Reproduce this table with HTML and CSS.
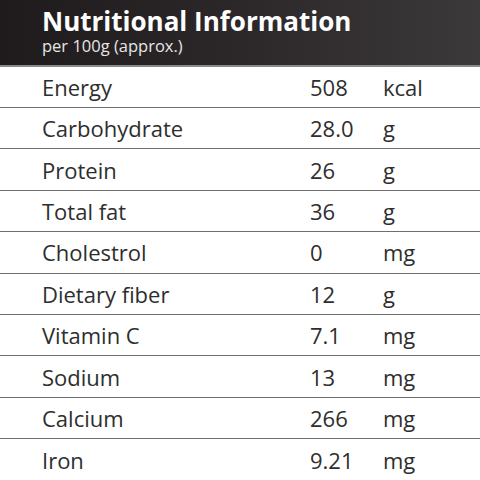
FILE: index.html
```html
<!DOCTYPE html>
<html lang="en">
<head>
    <meta charset="UTF-8">
    <title>Nutritional Information</title>
    <link rel="stylesheet" href="styles.css">
</head>
<body>
    <div class="header">
        <h1>Nutritional Information</h1>
        <p>per 100g (approx.)</p>
    </div>

    <div class="table">
        <div class="row"><span class="name">Energy</span><span class="value">508</span><span class="unit">kcal</span></div>
        <div class="row"><span class="name">Carbohydrate</span><span class="value">28.0</span><span class="unit">g</span></div>
        <div class="row"><span class="name">Protein</span><span class="value">26</span><span class="unit">g</span></div>
        <div class="row"><span class="name">Total fat</span><span class="value">36</span><span class="unit">g</span></div>
        <div class="row"><span class="name">Cholestrol</span><span class="value">0</span><span class="unit">mg</span></div>
        <div class="row"><span class="name">Dietary fiber</span><span class="value">12</span><span class="unit">g</span></div>
        <div class="row"><span class="name">Vitamin C</span><span class="value">7.1</span><span class="unit">mg</span></div>
        <div class="row"><span class="name">Sodium</span><span class="value">13</span><span class="unit">mg</span></div>
        <div class="row"><span class="name">Calcium</span><span class="value">266</span><span class="unit">mg</span></div>
        <div class="row"><span class="name">Iron</span><span class="value">9.21</span><span class="unit">mg</span></div>
    </div>
</body>
</html>
```

FILE: styles.css
```css
body {
    font-family: "Open Sans", "Noto Sans", sans-serif;
    background-color: #fff;
    color: #2e2e2e;
    margin: 0;
    padding: 0;
    width: 480px;
    height: 480px;
    overflow: hidden;
}

.header {
    height: 66.6px;
    box-sizing: border-box;
    padding: 6px 0 0 42px;
    background: linear-gradient(90deg, #1f1b1c 0%, #2c2829 50%, #3c393a 100%);
    border-bottom: 2px solid #8a8a8a;
    color: #fff;
}

.header h1 {
    margin: 0;
    font-size: 26px;
    line-height: 30px;
    font-weight: 700;
}

.header p {
    margin: 0;
    font-size: 16.5px;
    line-height: 20px;
    color: #e6e6e6;
}

.row {
    display: grid;
    grid-template-columns: 268px 73px 1fr;
    align-items: center;
    height: 41.4px;
    box-sizing: border-box;
    padding-left: 42px;
    border-bottom: 1.5px solid #6e6e6e;
    font-size: 22px;
}

.row:last-child {
    border-bottom: none;
}
```
